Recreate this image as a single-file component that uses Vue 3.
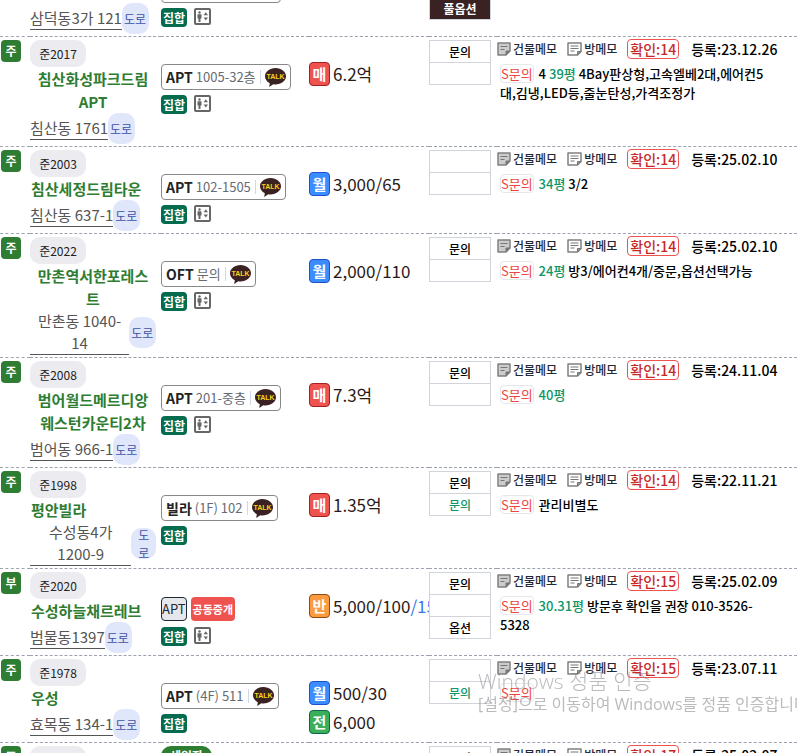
<script setup>
const dealKinds = {
  매: 'sale',
  월: 'monthly',
  반: 'half',
  전: 'lease',
}

const listings = [
  {
    badge: '주', year: '준2019', name: '삼덕청아람리슈빌', address: '삼덕동3가 121',
    kind: 'APT', room: '101-중층', elevator: true,
    deals: [],
    cells: [{ text: '' }, { text: '' }, { text: '풀옵션', tone: 'full' }],
    confirmed: '14', registered: '25.02.10', memo: [],
  },
  {
    badge: '주', year: '준2017', name: '침산화성파크드림 APT', address: '침산동 1761',
    kind: 'APT', room: '1005-32층', elevator: true,
    deals: [{ type: '매', price: '6.2억' }],
    cells: [{ text: '문의' }, { text: '' }],
    confirmed: '14', registered: '23.12.26',
    memo: [{ text: '4' }, { text: '39평', area: true }, { text: '4Bay판상형,고속엘베2대,에어컨5대,김냉,LED등,줄눈탄성,가격조정가' }],
  },
  {
    badge: '주', year: '준2003', name: '침산세정드림타운', address: '침산동 637-1',
    kind: 'APT', room: '102-1505', elevator: true,
    deals: [{ type: '월', price: '3,000/65' }],
    cells: [{ text: '' }, { text: '' }],
    confirmed: '14', registered: '25.02.10',
    memo: [{ text: '34평', area: true }, { text: '3/2' }],
  },
  {
    badge: '주', year: '준2022', name: '만촌역서한포레스트', address: '만촌동 1040-14',
    kind: 'OFT', room: '문의', elevator: true,
    deals: [{ type: '월', price: '2,000/110' }],
    cells: [{ text: '문의' }, { text: '' }],
    confirmed: '14', registered: '25.02.10',
    memo: [{ text: '24평', area: true }, { text: '방3/에어컨4개/중문,옵션선택가능' }],
  },
  {
    badge: '주', year: '준2008', name: '범어월드메르디앙웨스턴카운티2차', address: '범어동 966-1',
    kind: 'APT', room: '201-중층', elevator: true,
    deals: [{ type: '매', price: '7.3억' }],
    cells: [{ text: '문의' }, { text: '' }],
    confirmed: '14', registered: '24.11.04',
    memo: [{ text: '40평', area: true }],
  },
  {
    badge: '주', year: '준1998', name: '평안빌라', address: '수성동4가 1200-9',
    kind: '빌라', room: '(1F) 102', elevator: false,
    deals: [{ type: '매', price: '1.35억' }],
    cells: [{ text: '문의' }, { text: '문의', tone: 'green' }],
    confirmed: '14', registered: '22.11.21',
    memo: [{ text: '관리비별도' }],
  },
  {
    badge: '부', year: '준2020', name: '수성하늘채르레브', address: '범물동1397',
    kind: 'APT', shared: true, elevator: true,
    deals: [{ type: '반', price: '5,000/100', extra: '/150' }],
    cells: [{ text: '문의' }, { text: '' }, { text: '옵션' }],
    confirmed: '15', registered: '25.02.09',
    memo: [{ text: '30.31평', area: true }, { text: '방문후 확인을 권장 010-3526-5328' }],
  },
  {
    badge: '주', year: '준1978', name: '우성', address: '효목동 134-1',
    kind: 'APT', room: '(4F) 511', elevator: false,
    deals: [{ type: '월', price: '500/30' }, { type: '전', price: '6,000' }],
    cells: [{ text: '' }, { text: '문의', tone: 'green' }],
    confirmed: '15', registered: '23.07.11', memo: [],
  },
  {
    badge: '주', year: '준2015', name: '우방', address: '효목동 92',
    kind: 'APT', room: '101-805', elevator: true, tenant: '세입자',
    deals: [],
    cells: [{ text: '문의' }, { text: '' }],
    confirmed: '17', registered: '25.02.07', memo: [],
  },
]
</script>

<template>
  <main class="page">
    <table class="listings">
      <colgroup>
        <col class="col-badge" />
        <col class="col-building" />
        <col class="col-unit" />
        <col class="col-price" />
        <col class="col-cells" />
        <col />
      </colgroup>
      <tbody>
        <tr v-for="item in listings" :key="item.name">
          <td><span class="badge">{{ item.badge }}</span></td>
          <td class="building">
            <span class="year">{{ item.year }}</span>
            <button class="name" type="button">{{ item.name }}</button>
            <div class="place">
              <button class="address" type="button">{{ item.address }}</button>
              <button class="road" type="button">도로</button>
            </div>
          </td>
          <td class="unit">
            <div class="tenant-line"><span v-if="item.tenant" class="tenant">{{ item.tenant }}</span></div>
            <div v-if="item.shared" class="shared-line">
              <button class="kind-box" type="button">{{ item.kind }}</button>
              <span class="shared">공동중개</span>
            </div>
            <button v-else class="unit-button" type="button">
              <strong>{{ item.kind }}</strong>
              <span class="room">{{ item.room }}</span>
              <span class="divider"></span>
              <svg class="talk" viewBox="0 0 21 19" aria-hidden="true">
                <path d="M10.5 0C4.7 0 0 3.700 0 8.200c0 3 2 5.500 4.800 7L4.200 19 8.300 16.200c.7.100 1.400.200 2.200.200 5.800 0 10.500-3.700 10.500-8.200S16.300 0 10.500 0Z" fill="#3b2222" />
                <text x="10.500" y="10.800" text-anchor="middle" font-size="7" font-weight="700" fill="#f7d317">TALK</text>
              </svg>
            </button>
            <div class="tags">
              <span class="complex">집합</span>
              <svg v-if="item.elevator" class="elevator" viewBox="0 0 17 17" aria-hidden="true">
                <rect x="1" y="1" width="15" height="15" rx="1" fill="#fff" stroke="#666" stroke-width="2" />
                <circle cx="5.500" cy="4.500" r="1.200" fill="#666" />
                <path d="M3.500 6.200h4v4.300h-1V14h-2v-3.500h-1ZM11.800 4.200l2.200 3.100H9.600ZM9.600 9.500H14l-2.200 3.100Z" fill="#666" />
              </svg>
            </div>
          </td>
          <td class="price">
            <div v-for="deal in item.deals" :key="deal.type" class="deal">
              <span class="deal-type" :class="dealKinds[deal.type]">{{ deal.type }}</span>
              <span>{{ deal.price }}<span v-if="deal.extra" class="extra">{{ deal.extra }}</span></span>
            </div>
          </td>
          <td>
            <ul class="cells">
              <li v-for="(cell, i) in item.cells" :key="i" :class="cell.tone">{{ cell.text }}</li>
            </ul>
          </td>
          <td class="detail">
            <div class="actions">
              <button class="memo-button" type="button">
                <svg viewBox="0 0 14 14" aria-hidden="true">
                  <path d="M1 1h12v8L9 13H1Z" fill="#ccc" stroke="#808080" stroke-width="1.500" stroke-linejoin="round" />
                  <path d="M13 9H9v4Z" fill="#777" stroke="#777" stroke-linejoin="round" />
                  <path d="M3.500 4.500h7M3.500 7.500h4" stroke="#777" stroke-width="1.200" />
                </svg>
                건물메모
              </button>
              <button class="memo-button room-memo" type="button">
                <svg viewBox="0 0 15 14" aria-hidden="true">
                  <path d="M1 1h13v8.500L10.500 13H1Z" fill="#fff" stroke="#808080" stroke-width="1.500" stroke-linejoin="round" />
                  <path d="M14 9.500h-3.500V13Z" fill="#999" stroke="#777" stroke-linejoin="round" />
                  <path d="M3.500 4h8M3.500 6.500h8M3.500 9h4" stroke="#777" stroke-width="1.200" />
                </svg>
                방메모
              </button>
              <button class="confirm" type="button">확인:{{ item.confirmed }}</button>
              <span class="registered">등록:{{ item.registered }}</span>
            </div>
            <p class="memo">
              <button class="ask" type="button">S문의</button>
              <template v-for="(part, i) in item.memo" :key="i">{{ ' ' }}<span :class="{ area: part.area }">{{ part.text }}</span></template>
            </p>
          </td>
        </tr>
      </tbody>
    </table>
    <aside class="activation">
      <strong>Windows 정품 인증</strong>
      <span>[설정]으로 이동하여 Windows를 정품 인증합니다.</span>
    </aside>
  </main>
</template>

<style>
body {
  background: #fff;
}
</style>

<style scoped>
.page {
  height: 100vh;
  overflow: hidden;
  font-family: "Noto Sans CJK KR", "Noto Sans", sans-serif;
  font-size: 13px;
  color: #000;
}

button {
  margin: 0;
  padding: 0;
  border: 0;
  background: none;
  font: inherit;
  color: inherit;
  cursor: pointer;
}

.listings {
  width: 100%;
  margin-top: -51px;
  table-layout: fixed;
  border-spacing: 0;
}

.col-badge { width: 30px; }
.col-building { width: 131px; }
.col-unit { width: 148px; }
.col-price { width: 120px; }
.col-cells { width: 68px; }

td {
  padding: 3px 0 2px;
  border-top: 1px dashed #9ca3af;
  vertical-align: top;
}

.badge {
  display: block;
  width: 20px;
  margin-left: 1px;
  border-radius: 4px;
  background: #2e7d32;
  color: #fff;
  font-size: 12px;
  font-weight: 700;
  line-height: 22px;
  text-align: center;
}

td.building {
  padding-right: 5px;
}

.year {
  display: block;
  width: 56px;
  border-radius: 10px;
  background: #ebebf0;
  color: #222;
  line-height: 27px;
  font-size: 12px;
  text-align: center;
}

.name {
  display: block;
  padding: 0 1px;
  color: #2e7d32;
  font-size: 15px;
  font-weight: 700;
  line-height: 23px;
  text-align: center;
}

.place {
  display: flex;
  align-items: center;
}

.address {
  border-bottom: 1px solid #555;
  color: #555;
  font-size: 15px;
  line-height: 22px;
  text-align: center;
}

.road {
  display: flex;
  align-items: center;
  box-sizing: content-box;
  width: 23px;
  height: 31px;
  padding: 0 2px;
  border-radius: 10px;
  background: #e0e7fb;
  color: #3f51a5;
  font-size: 12px;
  line-height: 18px;
}

.tenant-line {
  height: 24px;
}

.tenant {
  display: inline-block;
  padding: 0 9px;
  border-radius: 10px;
  background: #2e7d32;
  color: #fff;
  font-size: 12px;
  font-weight: 700;
  line-height: 20px;
}

.unit-button {
  display: flex;
  align-items: center;
  gap: 4px;
  height: 26px;
  padding: 0 4px;
  border: 1px solid #888;
  border-radius: 4px;
  background: #fff;
  color: #666b73;
  line-height: 24px;
  white-space: nowrap;
}

.unit-button strong {
  color: #222;
  font-size: 14px;
}

.room {
  margin-left: -1px;
}

.divider {
  width: 1px;
  height: 14px;
  background: #cfd8ea;
}

.talk {
  width: 21px;
  height: 19px;
  font-family: "Liberation Sans", sans-serif;
}

.shared-line {
  display: flex;
  align-items: center;
  gap: 4px;
  height: 26px;
}

.kind-box {
  height: 24px;
  border: 1px solid #1f2937;
  border-radius: 4px;
  background: #e5e7eb;
  color: #1f2937;
  line-height: 22px;
}

.shared {
  padding: 0 2px;
  border-radius: 4px;
  background: #ef5350;
  color: #fff;
  font-size: 11px;
  font-weight: 700;
  line-height: 24px;
}

.tags {
  display: flex;
  gap: 7px;
  margin-top: 5px;
}

.complex {
  align-self: flex-end;
  padding: 0 2px;
  border-radius: 4px;
  background: #046c4e;
  color: #fff;
  font-size: 12px;
  font-weight: 700;
  line-height: 19px;
}

.elevator {
  width: 17px;
  height: 17px;
}

td.price {
  padding-top: 25px;
  overflow: hidden;
}

.deal {
  display: flex;
  gap: 3px;
  margin-bottom: 5px;
  color: #2b1a17;
  font-size: 17px;
  line-height: 24px;
  white-space: nowrap;
}

.deal-type {
  flex: none;
  width: 19px;
  border: 1px solid;
  border-radius: 4px;
  color: #fff;
  font-size: 15px;
  font-weight: 700;
  line-height: 22px;
  text-align: center;
}

.sale { background: #ef5350; border-color: #a32020; }
.monthly { background: #3b8cff; border-color: #1d4fd0; }
.half { background: #fb9a40; border-color: #8f4a12; }
.lease { background: #3aae58; border-color: #08694a; }

.extra {
  color: #3b78f0;
}

.cells {
  width: 60px;
  margin: 0;
  padding: 0;
  border: 1px solid #d1d5db;
  list-style: none;
  font-size: 12px;
  font-weight: 500;
  line-height: 21px;
  text-align: center;
}

.cells li {
  height: 21px;
}

.cells li + li {
  border-top: 1px solid #d1d5db;
}

.cells .full {
  background: #3b2222;
  color: #fff;
  font-weight: 700;
}

.cells .green {
  color: #0d9668;
}

td.detail {
  padding-top: 2px;
}

.actions {
  display: flex;
  align-items: center;
  gap: 10px;
  white-space: nowrap;
}

.memo-button {
  display: flex;
  align-items: center;
  gap: 2px;
  color: #1f2937;
  font-size: 12px;
  font-weight: 500;
  line-height: 20px;
}

.memo-button svg {
  width: 14px;
  height: 14px;
}

.room-memo svg {
  width: 15px;
}

.confirm {
  padding: 0 2px;
  border: 1px solid #ef5350;
  border-radius: 4px;
  color: #c62828;
  font-size: 14px;
  font-weight: 500;
  line-height: 18px;
}

.registered {
  margin-left: 2px;
  font-size: 14px;
  font-weight: 500;
  line-height: 20px;
}

.memo {
  margin: 5px 24px 0 3px;
  font-weight: 500;
  line-height: 19px;
}

.ask {
  margin-right: 2px;
  border: 1px solid #e5e7eb;
  border-radius: 4px;
  color: #ef4444;
  font-weight: 400;
  line-height: 17px;
}

.area {
  color: #0d9668;
}

.activation {
  position: fixed;
  left: 478px;
  top: 667px;
  display: flex;
  flex-direction: column;
  color: rgba(120, 120, 120, 0.5);
  font-family: "Open Sans", "Noto Sans CJK KR", sans-serif;
  font-size: 16px;
  line-height: 18px;
  white-space: nowrap;
  pointer-events: none;
}

.activation strong {
  font-size: 21px;
  font-weight: 300;
  line-height: 28px;
}
</style>
